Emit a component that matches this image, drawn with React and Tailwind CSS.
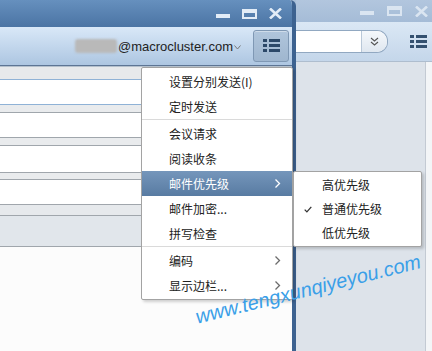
import React from 'react';

const Chevron = ({ light }) => (
  <svg width="7" height="11" viewBox="0 0 7 11" className="shrink-0">
    <path d="M1.5 1.5 L5.5 5.5 L1.5 9.5" fill="none" stroke={light ? '#ffffff' : '#6b6b6b'} strokeWidth="1.3" />
  </svg>
);

const ListIcon = ({ color = '#2c4868' }) => (
  <svg width="17" height="14" viewBox="0 0 17 14">
    <rect x="0" y="0" width="4" height="3" fill={color} />
    <rect x="6" y="0" width="11" height="3" fill={color} />
    <rect x="0" y="5" width="4" height="3" fill={color} />
    <rect x="6" y="5" width="11" height="3" fill={color} />
    <rect x="0" y="10" width="4" height="3" fill={color} />
    <rect x="6" y="10" width="11" height="3" fill={color} />
  </svg>
);

const WindowButtons = ({ color, gap }) => (
  <div className={`flex items-center ${gap}`}>
    <svg width="14" height="12" viewBox="0 0 14 12">
      <rect x="0" y="6" width="14" height="4" fill={color} />
    </svg>
    <svg width="15" height="10" viewBox="0 0 15 10">
      <rect x="1" y="1" width="13" height="8" fill="none" stroke={color} strokeWidth="2" />
      <rect x="1" y="1" width="13" height="3" fill={color} />
    </svg>
    <svg width="13" height="11" viewBox="0 0 13 11">
      <path d="M1 0.5 L12 10.5 M12 0.5 L1 10.5" stroke={color} strokeWidth="2.6" />
    </svg>
  </div>
);

const menuItems = [
  { label: '设置分别发送(I)' },
  { label: '定时发送' },
  { sep: true },
  { label: '会议请求' },
  { label: '阅读收条' },
  { label: '邮件优先级', sub: true, active: true },
  { label: '邮件加密...' },
  { label: '拼写检查' },
  { sep: true },
  { label: '编码', sub: true },
  { label: '显示边栏...', sub: true },
];

const priorities = [
  { label: '高优先级' },
  { label: '普通优先级', checked: true },
  { label: '低优先级' },
];

const Line = ({ color }) => <div className={`h-px ${color}`}></div>;

export default function App() {
  return (
    <div className="relative w-[432px] h-[351px] overflow-hidden bg-[#a9bfd9] flex text-[#222]" style={{ fontFamily: '"Liberation Sans", "Noto Sans CJK SC", sans-serif' }}>
      {/* Front compose window */}
      <div className="w-[296px] h-full shrink-0 flex flex-col bg-[#fcfcfc] border-r-4 border-[#3d6290] rounded-tr-[6px] overflow-hidden">
        <div className="h-[27px] shrink-0 bg-gradient-to-b from-[#6690be] to-[#4b74a4] flex items-center justify-end pr-[10px]">
          <WindowButtons color="#e2ecf7" gap="gap-[12px]" />
        </div>
        <div className="h-[38px] shrink-0 bg-gradient-to-b from-[#d9e8f8] to-[#adc6e1] flex items-center justify-end pr-[3px]">
          <div className="w-[42px] h-[14px] bg-[#b9b9b9] rounded-[3px] blur-[1px] mr-[1px]"></div>
          <span className="text-[13px] leading-none">@macrocluster.com</span>
          <svg width="7" height="5" viewBox="0 0 7 5" className="ml-[1px] mt-[2px]">
            <path d="M0.5 0.5 L3.5 4 L6.5 0.5" fill="none" stroke="#777" strokeWidth="1" />
          </svg>
          <div className="ml-[12px] w-[36px] h-[32px] rounded-[3px] border border-[#7f98b4] bg-gradient-to-b from-[#b0c5dc] to-[#9fb6cf] shadow-[inset_0_1px_0_rgba(255,255,255,0.4)] flex items-center justify-center">
            <ListIcon />
          </div>
        </div>
        <Line color="bg-[#5d7594]" />
        <div className="h-px bg-[#b4c0cc]"></div>
        <div className="h-[12px] bg-[#e7e9eb]"></div>
        <Line color="bg-[#8fb2d6]" />
        <div className="h-[24px] bg-white"></div>
        <Line color="bg-[#8fb2d6]" />
        <div className="h-[7px] bg-[#e9ebed]"></div>
        <Line color="bg-[#a0a6ac]" />
        <div className="h-[24px] bg-white"></div>
        <Line color="bg-[#a0a6ac]" />
        <div className="h-[7px] bg-[#e9ebed]"></div>
        <Line color="bg-[#a0a6ac]" />
        <div className="h-[26px] bg-white"></div>
        <Line color="bg-[#a0a6ac]" />
        <div className="h-[6px] bg-[#e9ebed]"></div>
        <Line color="bg-[#a0a6ac]" />
        <div className="h-[24px] bg-white"></div>
        <Line color="bg-[#a0a6ac]" />
        <div className="h-[10px] bg-[#e6e9ec]"></div>
        <Line color="bg-[#a0a6ac]" />
        <div className="h-[30px] bg-[#e1e6eb]"></div>
        <Line color="bg-[#a0a6ac]" />
        <div className="flex-1 bg-[#fcfcfc]"></div>
      </div>

      {/* Background window */}
      <div className="flex-1 flex flex-col">
        <div className="h-[22px] shrink-0 bg-gradient-to-b from-[#b2c6de] to-[#a5bcd7] flex items-center justify-end pr-[4px]">
          <WindowButtons color="#dae5f1" gap="gap-[13px]" />
        </div>
        <div className="h-[40px] shrink-0 bg-gradient-to-b from-[#dbe8f5] to-[#c4d6ea] border-b border-[#aebdce] flex items-center pr-[5px]">
          <div className="w-[92px] h-[23px] flex bg-white border-y border-r border-[#91a8c1] rounded-r-[11px] overflow-hidden">
            <div className="flex-1"></div>
            <div className="w-[26px] border-l border-[#b9c8d8] bg-gradient-to-b from-[#f5f8fb] to-[#dfe7f0] flex items-center justify-center">
              <svg width="9" height="9" viewBox="0 0 9 9">
                <path d="M1 1 L4.5 4 L8 1 M1 5 L4.5 8 L8 5" fill="none" stroke="#555" strokeWidth="1.1" />
              </svg>
            </div>
          </div>
          <div className="ml-auto">
            <ListIcon color="#33506f" />
          </div>
        </div>
        <div className="flex-1 flex">
          <div className="flex-1 bg-[#dde3ea]"></div>
          <div className="w-px bg-[#c3cad3]"></div>
          <div className="w-[6px] bg-[#f3f5f7]"></div>
        </div>
      </div>

      {/* Dropdown menu */}
      <div className="absolute left-[141px] top-[67px] w-[152px] bg-white border border-[#a3a3a3] rounded-[2px] shadow-[2px_2px_3px_rgba(0,0,0,0.18)] py-px text-[12px]" style={{ fontFamily: '"Noto Sans CJK SC", "Liberation Sans", sans-serif' }}>
        {menuItems.map((item, i) =>
          item.sep ? (
            <div key={i} className="h-[2px] border-t border-[#dadada]"></div>
          ) : (
            <div
              key={i}
              className={`h-[25px] flex items-center pl-[27px] pr-[11px] ${item.active ? 'bg-gradient-to-b from-[#7596bb] to-[#587ba2] text-white' : ''}`}
            >
              <span className="flex-1">{item.label}</span>
              {item.sub && <Chevron light={item.active} />}
            </div>
          )
        )}
      </div>

      {/* Priority submenu */}
      <div className="absolute left-[293px] top-[171px] w-[129px] bg-white border border-[#a3a3a3] rounded-[2px] shadow-[2px_2px_3px_rgba(0,0,0,0.18)] py-px text-[12px]" style={{ fontFamily: '"Noto Sans CJK SC", "Liberation Sans", sans-serif' }}>
        {priorities.map((p) => (
          <div key={p.label} className="h-[24px] flex items-center relative pl-[28px]">
            {p.checked && (
              <svg width="8" height="7" viewBox="0 0 8 7" className="absolute left-[10px] top-[9px]">
                <path d="M0.7 3.6 L2.9 5.9 L7.3 0.8" fill="none" stroke="#333" strokeWidth="1.3" />
              </svg>
            )}
            <span>{p.label}</span>
          </div>
        ))}
      </div>

      {/* Watermark */}
      <div className="absolute left-[308px] top-[289px] -translate-x-1/2 -translate-y-1/2 -rotate-[14deg] whitespace-nowrap italic text-[20px] leading-none text-[#3a9fe8]">
        www.tengxunqiyeyou.com
      </div>
    </div>
  );
}
